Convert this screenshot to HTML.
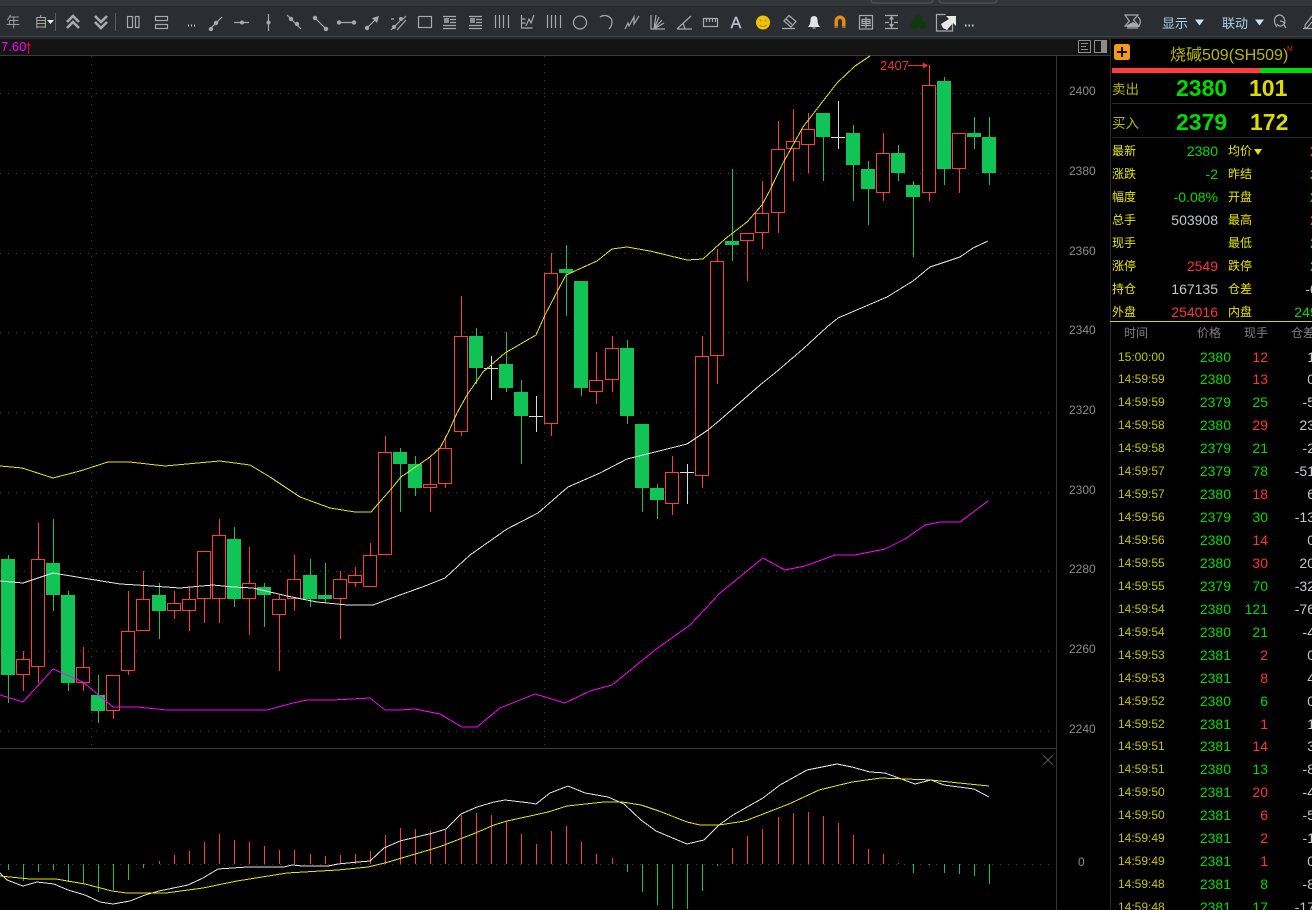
<!DOCTYPE html>
<html lang="zh">
<head>
<meta charset="utf-8">
<title>烧碱509</title>
<style>
html,body{margin:0;padding:0;background:#000;width:1312px;height:910px;overflow:hidden}
body{position:relative;font-family:"Liberation Sans","Noto Sans CJK SC",sans-serif;color:#ccc}
#art{position:absolute;left:0;top:0}
.a{position:absolute;white-space:nowrap;line-height:20px;height:20px}
#panel{position:absolute;left:1110px;top:39px;width:202px;height:871px;overflow:hidden;background:#000;border-left:1px solid #2c2c2c;box-sizing:border-box}
#info{position:absolute;left:1110px;top:140px;width:202px;height:181px;overflow:hidden}
.q{position:absolute;left:0;width:202px;height:23px;line-height:23px;font-size:14px}
.q b{position:absolute;font-weight:normal;font-size:12px;color:#e6e600;left:2px;top:0}
.q b+b{left:118px}
.q i{position:absolute;font-style:normal;right:94px;top:0}
.q u{position:absolute;text-decoration:none;right:-29px;top:0}
#tb{position:absolute;left:1110px;top:345.500px;width:202px;height:565px;overflow:hidden}
.r{position:relative;height:22.95px;line-height:23px;font-size:14px}
.r i{position:absolute;font-style:normal;top:0}
.t{left:8px;color:#c6c600;font-size:12px}
.p{right:81px;color:#00dc00}
.h{right:44px}
.o{right:-3px;color:#c4c8cc}
.R{color:#ff3434}.G{color:#00dc00}.W{color:#c4c8cc}
</style>
</head>
<body>
<svg id="art" width="1312" height="910" viewBox="0 0 1312 910" xmlns="http://www.w3.org/2000/svg" font-family="'Liberation Sans','Noto Sans CJK SC',sans-serif">
<!-- chrome -->
<rect width="1312" height="7" fill="#33363b"/>
<rect y="7" width="1312" height="29" fill="#2a2e32"/>
<rect y="6" width="1312" height="1" fill="#24272a"/>
<rect y="36" width="1312" height="1" fill="#404346"/>
<rect y="37" width="1312" height="2" fill="#25282b"/>
<rect y="39" width="1110" height="16" fill="#141414"/>
<rect y="55" width="1110" height="1" fill="#3c3c3c"/>
<path d="M874 3a3 3 0 0 1-3-3M874 3h56a3 3 0 0 0 3-3M942 3a3 3 0 0 1-3-3M942 3h52a3 3 0 0 0 3-3" fill="none" stroke="#55585c"/>

<!-- toolbar icons -->
<g shape-rendering="geometricPrecision">
<text x="13" y="27" font-size="14" fill="#9a9ca0" text-anchor="middle">年</text>
<text x="41" y="27" font-size="14" fill="#a8a49c" text-anchor="middle">自</text>
<path d="M47 20h7l-3.500 4z" fill="#e8e8e8"/>
<path d="M55.500 13v18M115.500 13v18" stroke="#5a5d60"/>
<g fill="none" stroke="#a6a9ac" stroke-width="2.600">
<path d="M67 22l6-6 6 6M67 28l6-6 6 6"/>
<path d="M95 16l6 6 6-6M95 22l6 6 6-6"/>
</g>
<g fill="none" stroke="#a6a9ac" stroke-width="1.200">
<rect x="127.500" y="16.500" width="5" height="11"/><rect x="135.500" y="16.500" width="3.500" height="11"/>
<rect x="155.500" y="16.500" width="12" height="4"/><rect x="155.500" y="24.500" width="12" height="4"/>
<path d="M209 30l13-13M234 22.500h15M268.500 14v17M287 15l14 14M314 17l12 12M337 22.500h18M367 28l10-10"/>
<path d="M391 30l9-9M403 19l3-3M394 19l-3 0M397 30l9-10" />
<rect x="418.500" y="16.500" width="13" height="11"/>
<path d="M443 16.500h13M450 19.500h6M450 22.500h6M443 25.500h13M443 28.500h13M469 16.500h13M476 19.500h6M476 22.500h6M469 25.500h13M469 28.500h13"/>
<path d="M495.500 15v13M499.500 15v13M503.500 15v13M508.500 15v13M547.500 15v13M551.500 15v13M555.500 15v13M560.500 15v13"/>
<path d="M521.500 15v13h11M521.500 19h4M521.500 23h4M526 26l3-7 2 4 3-8"/>
<circle cx="580" cy="22.500" r="6.500"/>
<path d="M600 17c4-3 12-1 12 5 0 3-1 5-3 7"/>
<path d="M625 29l3-6 1 3 5-9 0 7 5-8"/>
<path d="M651 15v14h14M654 29l2-14M654 29l5-12M654 29l8-9M654 29l10-6"/>
<path d="M677 29l14-13M677 29h15M683 23l2 6"/>
<rect x="703.500" y="18.500" width="14" height="8"/><path d="M706.500 18v4M709.500 18v4M712.500 18v4M715.500 18v4"/>
<path d="M789 15.500l7 6-5 5.500-7-6zM786 19l6 5.500M782 28.500h13"/>
<rect x="859.500" y="15.500" width="13" height="13.500"/><path d="M866 17v11M862 19.500h8v4h-8zM862 21.500h8M861 25.500h10"/>
<path d="M885 15.500h13M885 28.500h13M885 22.500h4M894 22.500h4M891.500 17v11"/>
<path d="M952.500 22v9h-16V14.500h9"/>
</g>
<path d="M891.500 15.500l-2.500 4h5zM891.500 28l-2.500-4h5z" fill="#a6a9ac"/>
<g fill="#a6a9ac">
<circle cx="211" cy="29" r="2.200"/><circle cx="216" cy="23" r="2.200"/><circle cx="242" cy="22.500" r="2"/><circle cx="268.500" cy="22.500" r="2"/>
<circle cx="291" cy="19" r="2.200"/><circle cx="297" cy="24" r="2.200"/><circle cx="315" cy="18" r="2.200"/><circle cx="326" cy="29" r="2.200"/>
<circle cx="339" cy="22.500" r="2.200"/><circle cx="354" cy="22.500" r="2.200"/><circle cx="367" cy="28" r="2.200"/><path d="M372 18l7-2-2 7z"/>
<circle cx="394" cy="27" r="2"/><circle cx="401" cy="19" r="2"/>
<rect x="444" y="18" width="5" height="5" fill="#8d9095"/><rect x="470" y="18" width="5" height="5" fill="#8d8a95"/>
</g>
<path d="M188 25.500h1M191 25.500h1M194 25.500h1M965 25.500h1.500M968.500 25.500h1.500M972 25.500h1.500" stroke="#bcd8ec" stroke-width="2"/>
<text x="736" y="28" font-size="16" fill="#b4c2cc" text-anchor="middle" stroke="#b4c2cc" stroke-width=".4">A</text>
<circle cx="763" cy="22.500" r="7" fill="#f2c400"/><circle cx="760.500" cy="20.500" r="1" fill="#a88800"/><circle cx="765.500" cy="20.500" r="1" fill="#a88800"/><path d="M759.500 25c2 2 5 2 7 0" stroke="#a88800" fill="none"/>
<path d="M809 26.500c2-2 2-5 2-7 0-4 6-4 6 0 0 2 0 5 2 7zM812.500 28h3" fill="#e0e4e8" stroke="#e0e4e8"/>
<path d="M834.500 27V21a5.500 5.500 0 0 1 11 0v6h-3.500V21a2 2 0 0 0-4 0v6z" fill="#e88a10"/><path d="M834.500 28h3.500v-2h-3.500zM842 28h3.500v-2H842z" fill="#8c6c3c"/>
<g fill="#0c3a0c"><circle cx="918.500" cy="19" r="4"/><circle cx="914.500" cy="25" r="4"/><circle cx="922.500" cy="25" r="4"/></g>
<path d="M941 24l8-5-3-3h10v10l-3-3-6 7-4-2z" fill="#e8e8e8"/>
<g fill="none" stroke="#a6a9ac" stroke-width="1.200">
<path d="M1125 15h13l-4.500 5 1 1 4.500 5h-14l4.500-5-1-1zM1127 28h11M1138 17c3 2 3 7 0 10"/>
<path d="M1277 27c-4-5-3-11 2-12 5 0 8 7 4 10-2 2-5 1-6-1M1280 21c2 0 4 1 5 3M1284 25l2 3"/>
<path d="M1305 25l7-9M1305 25v3h2l5-6M1303 28.500h9"/>
</g>
<path d="M1127 25l6-3 6 3v2h-12z" fill="#a6a9ac"/>
<text x="1175" y="28" font-size="13" fill="#aecfe8" text-anchor="middle">显示</text>
<path d="M1195 19.500h9l-4.500 6z" fill="#c8e0f0"/>
<text x="1235" y="28" font-size="13" fill="#aecfe8" text-anchor="middle">联动</text>
<path d="M1255 19.500h9l-4.500 6z" fill="#c8e0f0"/>

<!-- header row -->
<text x="1" y="51" font-size="13" fill="#ff00ff">7.60</text>
<path d="M28.500 43v11M26.500 46l2-3 2 3" stroke="#e00040" fill="none"/>
<g fill="none" stroke="#8c8c8c">
<path d="M1078.500 40.500h12M1078.500 40.500v12h12v-12M1081 43.500h7M1081 46.500h5M1081 49.500h7"/>
<rect x="1094.500" y="40.500" width="12" height="12"/>
</g>
<rect x="1101" y="41" width="5" height="11" fill="#8c8c8c"/>

<!-- frames -->
<g shape-rendering="crispEdges">
<path d="M0 748.500h1056" stroke="#3a3a3a"/>
<path d="M1056.500 56v854" stroke="#333"/>

<!-- grid -->
<g stroke="#404040" stroke-dasharray="1 7" fill="none">
<path d="M0 93.500h1056M0 173.500h1056M0 253.500h1056M0 332.500h1056M0 412.500h1056M0 492.500h1056M0 571.500h1056M0 651.500h1056M0 731.500h1056M0 864.500h1056"/>
<path d="M91.500 56v692M544.500 56v692"/>
</g>

<!-- green candles -->
<path fill="none" stroke="#10c455" d="M8.500 555V703M53.500 519V611M68.500 591V691M98.500 675V723M159.500 583V639M234.500 527V607M264.500 583V627M310.500 559V607M325.500 563V603M400.500 448V512M415.500 456V496M476.500 328V384M506.500 332V392M521.500 380V464M566.500 245V316M581.500 281V396M627.500 340V424M642.500 424V512M657.500 484V519M732.500 169V261M823.500 113V181M853.500 125V201M868.500 161V225M898.500 145V181M913.500 181V257M944.500 77V185M974.500 117V149M989.500 117V185"/>
<path fill="#10c455" d="M1 559h14v116h-14zM46 563h14v32h-14zM61 595h14v88h-14zM91 695h14v16h-14zM152 595h14v16h-14zM227 539h14v60h-14zM257 587h14v8h-14zM303 575h14v24h-14zM318 595h14v4h-14zM393 452h14v12h-14zM408 464h14v24h-14zM469 336h14v32h-14zM499 364h14v24h-14zM514 392h14v24h-14zM559 269h14v4h-14zM574 281h14v107h-14zM620 348h14v68h-14zM635 424h14v64h-14zM650 488h14v12h-14zM725 241h14v4h-14zM816 113h14v24h-14zM846 133h14v32h-14zM861 169h14v20h-14zM891 153h14v20h-14zM906 185h14v12h-14zM937 81h14v88h-14zM967 133h14v4h-14zM982 137h14v36h-14z"/>

<!-- red candles -->
<path fill="none" stroke="#ff3c3c" d="M23.500 651V691M38.500 523V683M83.500 647V691M113.500 675V719M128.500 591V675M143.500 571V631M174.500 591V619M189.500 587V631M204.500 551V623M219.500 519V623M249.500 547V635M279.500 595V671M294.500 555V611M340.500 571V639M355.500 567V587M370.500 543V587M385.500 436V555M430.500 458V512M445.500 436V488M461.500 296V436M551.500 253V436M596.500 352V404M612.500 336V392M672.500 456V515M702.500 336V488M717.500 249V384M747.500 233V281M762.500 181V249M778.500 121V233M793.500 109V181M808.500 113V173M883.500 133V201M929.500 65V201M959.500 133V193"/>
<path fill="#000" stroke="#ff3c3c" d="M16.500 659.500h13v15h-13zM31.500 559.500h13v107h-13zM76.500 667.500h13v15h-13zM106.500 675.500h13v35h-13zM121.500 631.500h13v39h-13zM136.500 599.500h13v31h-13zM167.500 603.500h13v7h-13zM182.500 599.500h13v11h-13zM197.500 551.500h13v47h-13zM212.500 535.500h13v63h-13zM242.500 583.500h13v15h-13zM272.500 599.500h13v15h-13zM287.500 579.500h13v19h-13zM333.500 579.500h13v19h-13zM348.500 575.500h13v7h-13zM363.500 555.500h13v31h-13zM378.500 452.500h13v102h-13zM423.500 484.500h13v3h-13zM438.500 448.500h13v35h-13zM454.500 336.500h13v95h-13zM544.500 273.500h13v150h-13zM589.500 380.500h13v11h-13zM605.500 348.500h13v31h-13zM665.500 472.500h13v31h-13zM695.500 356.500h13v119h-13zM710.500 261.500h13v94h-13zM740.500 233.500h13v7h-13zM755.500 213.500h13v19h-13zM771.500 149.500h13v63h-13zM786.500 141.500h13v7h-13zM801.500 129.500h13v15h-13zM876.500 153.500h13v39h-13zM922.500 85.500h13v107h-13zM952.500 133.500h13v35h-13z"/>

<!-- doji -->
<path fill="none" stroke="#dcdcdc" d="M491.500 356V400M484 368.500h14M536.500 396V432M529 416.500h14M687.500 464V504M680 472.500h14M838.500 101V149M831 137.500h14"/>

<!-- bands -->
<g fill="none">
<polyline stroke="#e6e600" points="0,466 22,468 53,478 80,471 108,462 130,462 165,466 220,461 250,465 270,477 300,497 330,508 355,512 371,512 392,488 401,477 430,457 440,448 448,433 457,413 467,395 483,372 505,353 536,335 545,315 557,292 566,275 597,261 612,249 627,247 650,251 687,260 703,259 725,239 747,222 762,205 770,190 783,163 803,127 837,83 855,66 870,56"/>
<polyline stroke="#e4e4e4" points="0,581 23,583 53,573 83,578 120,584 137,585 180,588 213,585 233,587 253,588 287,596 317,602 347,605 373,605 400,595 425,586 445,578 470,555 507,529 538,513 568,487 600,473 627,459 687,444 708,430 720,420 760,385 775,373 803,349 827,327 838,318 887,297 913,281 930,267 960,257 973,248 988,241"/>
<polyline stroke="#ff00ff" points="0,695 23,702 53,669 83,682 113,707 137,707 167,710 227,710 267,710 293,703 307,700 333,700 370,698 385,710 400,710 415,709 440,714 462,727 477,727 500,708 535,694 565,703 590,691 612,685 655,650 690,625 720,593 763,558 785,570 805,566 835,555 855,555 885,549 905,539 925,525 940,522 960,522 988,501"/>
</g>

<!-- MACD bars -->
<path fill="none" stroke="#10c455" d="M8.500 864v6M23.500 864v17M38.500 864v8M53.500 864v6M68.500 864v18M83.500 864v20M98.500 864v28M113.500 864v26M128.500 864v16M143.500 864v4M627.500 864v8M642.500 864v28M657.500 864v41M672.500 864v45M687.500 864v45M702.500 864v27M717.500 864v2M913.500 864v9M929.500 864v1M944.500 864v9M959.500 864v10M974.500 864v12M989.500 864v20"/>
<path fill="none" stroke="#ff3c3c" d="M159.500 864v-3M174.500 864v-9M189.500 864v-13M204.500 864v-22M219.500 864v-30M234.500 864v-24M249.500 864v-22M264.500 864v-18M279.500 864v-14M294.500 864v-14M310.500 864v-10M325.500 864v-8M340.500 864v-9M355.500 864v-10M370.500 864v-13M385.500 864v-29M400.500 864v-36M415.500 864v-35M430.500 864v-33M445.500 864v-34M461.500 864v-49M476.500 864v-51M491.500 864v-49M506.500 864v-42M521.500 864v-30M536.500 864v-20M551.500 864v-33M566.500 864v-38M581.500 864v-22M596.500 864v-10M612.500 864v-6M732.500 864v-16M747.500 864v-28M762.500 864v-35M778.500 864v-47M793.500 864v-51M808.500 864v-52M823.500 864v-48M838.500 864v-41M853.500 864v-29M868.500 864v-15M883.500 864v-10M898.500 864v-1"/>

<!-- MACD lines -->
<polyline fill="none" stroke="#e4e4e4" points="0,873 7,880 23,886 37,882 54,884 68,890 85,895 100,902 113,904 130,901 145,895 159,891 188,885 203,878 218,869 247,867 284,867 292,865 303,866 328,866 338,864 358,862 370,861 384,848 400,841 433,833 446,829 461,814 477,807 494,802 505,800 530,803 536,804 550,793 568,786 585,793 608,797 624,804 641,820 656,831 687,844 704,840 719,825 733,815 763,798 780,785 807,770 837,764 852,767 870,772 885,773 915,784 931,780 944,785 974,789 989,797"/>
<polyline fill="none" stroke="#e6e600" points="0,876 30,879 56,879 85,884 112,891 127,893 166,893 203,888 237,881 287,873 338,870 368,867 385,863 439,847 473,834 494,825 507,821 530,816 548,812 567,806 604,802 622,802 641,805 659,811 687,822 700,825 719,825 745,821 789,804 819,790 852,782 881,778 931,780 959,783 989,786"/>
</g>

<path d="M1043 755l10 10M1053 755l-10 10" stroke="#5c5c5c" fill="none"/>

<!-- axis -->
<g font-size="12" fill="#8c8c8c">
<text x="1069" y="95">2400</text><text x="1069" y="175">2380</text><text x="1069" y="255">2360</text><text x="1069" y="334">2340</text><text x="1069" y="414">2320</text><text x="1069" y="494">2300</text><text x="1069" y="573">2280</text><text x="1069" y="653">2260</text><text x="1069" y="733">2240</text><text x="1078" y="866">0</text>
</g>

<!-- high marker -->
<text x="880" y="70" font-size="13" fill="#e83434">2407</text>
<path d="M908 65.500h17" stroke="#e83434" fill="none"/><path d="M923 62.500l5 3-5 3z" fill="#e83434"/>
</svg>

<div id="panel"></div>

<svg style="position:absolute;left:1110px;top:39px" width="202" height="300" viewBox="1110 39 202 300" xmlns="http://www.w3.org/2000/svg" font-family="'Liberation Sans','Noto Sans CJK SC',sans-serif">
<rect x="1114" y="44" width="16" height="16" rx="2.500" fill="#f59a17"/>
<path d="M1122 47v10M1117 52h10" stroke="#1a1200" stroke-width="2" fill="none"/>
<text x="1170" y="60" font-size="16" fill="#b8b800">烧碱509(SH509)</text>
<text x="1287" y="51" font-size="7" fill="#d23030">M</text>
<rect x="1112" y="68" width="148" height="5" fill="#ff3c3c"/>
<rect x="1260" y="68" width="52" height="5" fill="#00dc00"/>
<path d="M1112 103.500h200" stroke="#2a2a2e"/>
<path d="M1112 137.500h200" stroke="#2a2a2e"/>
<text x="1112" y="94" font-size="13.500" fill="#b8b800">卖出</text>
<text x="1176" y="96" font-size="23" font-weight="bold" fill="#00dc00">2380</text>
<text x="1249" y="96" font-size="23" font-weight="bold" fill="#dcdc00">101</text>
<text x="1112" y="128" font-size="13.500" fill="#b8b800">买入</text>
<text x="1176" y="130" font-size="23" font-weight="bold" fill="#00dc00">2379</text>
<text x="1250" y="130" font-size="23" font-weight="bold" fill="#dcdc00">172</text>
</svg>

<div id="info">
<div class="q" style="top:0"><b>最新</b><b>均价</b><i class="G">2380</i><u class="R">2381</u></div>
<div class="q" style="top:23px"><b>涨跌</b><b>昨结</b><i class="G">-2</i><u class="G">2382</u></div>
<div class="q" style="top:46px"><b>幅度</b><b>开盘</b><i class="G">-0.08%</i><u class="G">2380</u></div>
<div class="q" style="top:69px"><b>总手</b><b>最高</b><i class="W">503908</i><u class="R">2407</u></div>
<div class="q" style="top:92px"><b>现手</b><b>最低</b><u class="G">2359</u></div>
<div class="q" style="top:115px"><b>涨停</b><b>跌停</b><i class="R">2549</i><u class="G">2215</u></div>
<div class="q" style="top:138px"><b>持仓</b><b>仓差</b><i class="W">167135</i><u class="W">-6105</u></div>
<div class="q" style="top:161px"><b>外盘</b><b>内盘</b><i class="R">254016</i><u class="G">249892</u></div>
</div>
<div class="a" style="left:1254px;top:149px;width:0;height:0;border-left:4px solid transparent;border-right:4px solid transparent;border-top:6px solid #e6e600"></div>

<div class="a" style="left:1110px;top:321px;width:202px;height:1px;background:#d8d800"></div>
<div class="a" style="left:1124px;top:323px;font-size:12px;color:#808080">时间</div>
<div class="a" style="left:1197px;top:323px;font-size:12px;color:#808080">价格</div>
<div class="a" style="left:1244px;top:323px;font-size:12px;color:#808080">现手</div>
<div class="a" style="left:1291px;top:323px;font-size:12px;color:#808080">仓差</div>

<div id="tb">
<div class="r"><i class="t">15:00:00</i><i class="p">2380</i><i class="h R">12</i><i class="o">1</i></div>
<div class="r"><i class="t">14:59:59</i><i class="p">2380</i><i class="h R">13</i><i class="o">0</i></div>
<div class="r"><i class="t">14:59:59</i><i class="p">2379</i><i class="h G">25</i><i class="o">-5</i></div>
<div class="r"><i class="t">14:59:58</i><i class="p">2380</i><i class="h R">29</i><i class="o">23</i></div>
<div class="r"><i class="t">14:59:58</i><i class="p">2379</i><i class="h G">21</i><i class="o">-2</i></div>
<div class="r"><i class="t">14:59:57</i><i class="p">2379</i><i class="h G">78</i><i class="o">-51</i></div>
<div class="r"><i class="t">14:59:57</i><i class="p">2380</i><i class="h R">18</i><i class="o">6</i></div>
<div class="r"><i class="t">14:59:56</i><i class="p">2379</i><i class="h G">30</i><i class="o">-13</i></div>
<div class="r"><i class="t">14:59:56</i><i class="p">2380</i><i class="h R">14</i><i class="o">0</i></div>
<div class="r"><i class="t">14:59:55</i><i class="p">2380</i><i class="h R">30</i><i class="o">20</i></div>
<div class="r"><i class="t">14:59:55</i><i class="p">2379</i><i class="h G">70</i><i class="o">-32</i></div>
<div class="r"><i class="t">14:59:54</i><i class="p">2380</i><i class="h G">121</i><i class="o">-76</i></div>
<div class="r"><i class="t">14:59:54</i><i class="p">2380</i><i class="h G">21</i><i class="o">-4</i></div>
<div class="r"><i class="t">14:59:53</i><i class="p">2381</i><i class="h R">2</i><i class="o">0</i></div>
<div class="r"><i class="t">14:59:53</i><i class="p">2381</i><i class="h R">8</i><i class="o">4</i></div>
<div class="r"><i class="t">14:59:52</i><i class="p">2380</i><i class="h G">6</i><i class="o">0</i></div>
<div class="r"><i class="t">14:59:52</i><i class="p">2381</i><i class="h R">1</i><i class="o">1</i></div>
<div class="r"><i class="t">14:59:51</i><i class="p">2381</i><i class="h R">14</i><i class="o">3</i></div>
<div class="r"><i class="t">14:59:51</i><i class="p">2380</i><i class="h G">13</i><i class="o">-8</i></div>
<div class="r"><i class="t">14:59:50</i><i class="p">2381</i><i class="h R">20</i><i class="o">-4</i></div>
<div class="r"><i class="t">14:59:50</i><i class="p">2381</i><i class="h R">6</i><i class="o">-5</i></div>
<div class="r"><i class="t">14:59:49</i><i class="p">2381</i><i class="h R">2</i><i class="o">-1</i></div>
<div class="r"><i class="t">14:59:49</i><i class="p">2381</i><i class="h R">1</i><i class="o">0</i></div>
<div class="r"><i class="t">14:59:48</i><i class="p">2381</i><i class="h G">8</i><i class="o">-8</i></div>
<div class="r"><i class="t">14:59:48</i><i class="p">2381</i><i class="h G">17</i><i class="o">-17</i></div>
</div>
</body>
</html>
